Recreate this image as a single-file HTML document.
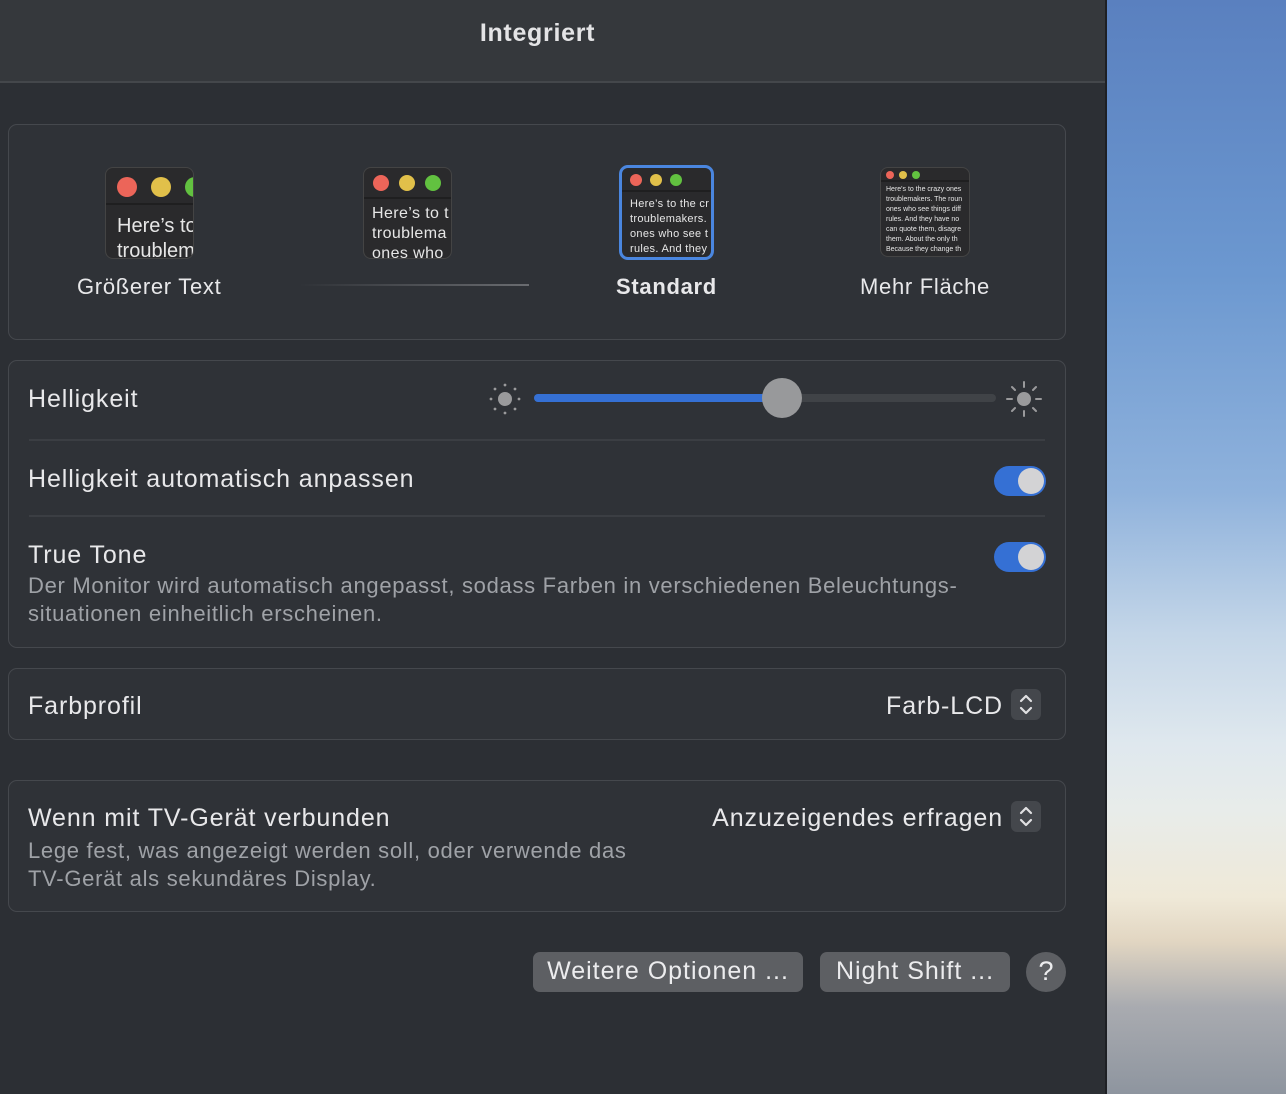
<!DOCTYPE html>
<html><head><meta charset="utf-8"><style>
*{box-sizing:border-box;margin:0;padding:0}
body{width:1286px;height:1094px;overflow:hidden;background:#2c2f34;font-family:"Liberation Sans",sans-serif;color:#e6e6e8;position:relative}
.hdr{position:absolute;left:0;top:0;width:1105px;height:83px;background:#35383c;border-bottom:2px solid #44474b}
.hdr h1{position:absolute;left:0;width:1075px;text-align:center;top:19px;font-size:25px;font-weight:bold;color:#e4e4e6;letter-spacing:0.7px}
.wall{position:absolute;left:1105px;top:0;width:181px;height:1094px;border-left:2px solid #1e2024;
background:linear-gradient(180deg,#5a80bf 0%,#6c98d0 25%,#8fb2dc 45%,#c4d6e8 58%,#dfe8ee 68%,#e8ecea 74%,#efe9d8 82%,#e2d6c2 86%,#a9abb0 92%,#8e959f 100%)}
.card{position:absolute;left:8px;width:1058px;background:#2f3237;border:1.5px solid #45484d;border-radius:9px}
.lbl{position:absolute;font-size:25px;color:#e8e8ea;letter-spacing:0.9px;white-space:nowrap}
.desc{position:absolute;font-size:22px;color:#9fa2a7;line-height:28px;letter-spacing:0.7px;white-space:nowrap}
.sep{position:absolute;left:20px;right:20px;height:2px;background:#3b3e43}
.win{position:absolute;background:#2a2a2c;border:1px solid #444;border-radius:8px;overflow:hidden}
.win .bar{border-bottom:2px solid #1f1f20;position:relative}
.dot{position:absolute;border-radius:50%}
.win p{color:#e6e6e6;white-space:nowrap;position:absolute}
.tog{position:absolute;width:52px;height:30px;border-radius:15px;background:#3570d4}
.tog:after{content:"";position:absolute;right:2px;top:2px;width:26px;height:26px;border-radius:50%;background:#d3d3d5}
.pop{position:absolute;width:30px;height:31px;border-radius:6px;background:#44474c}
.btn{position:absolute;top:952px;height:40px;border-radius:7px;background:#5d5f63;font-size:25px;color:#ececee;text-align:center;line-height:39px;letter-spacing:1px}
.sm{font-size:22px !important;letter-spacing:0.7px}
</style></head><body>
<div class="hdr"><h1>Integriert</h1></div>
<div class="wall"></div>

<div class="card" style="top:124px;height:216px">
 <div class="win" style="left:96px;top:42px;width:89px;height:92px">
  <div class="bar" style="height:37px"><div class="dot" style="left:11px;top:9px;width:20px;height:20px;background:#ec6559"></div><div class="dot" style="left:45px;top:9px;width:20px;height:20px;background:#e1c04a"></div><div class="dot" style="left:79px;top:9px;width:20px;height:20px;background:#62c140"></div></div>
  <p style="left:11px;top:46px;font-size:20px;line-height:25px">Here’s to<br>troublem</p>
 </div>
 <div class="lbl sm" style="left:68px;top:149px">Größerer Text</div>
 <div class="win" style="left:354px;top:42px;width:89px;height:92px">
  <div class="bar" style="height:31px"><div class="dot" style="left:9px;top:7px;width:16px;height:16px;background:#ec6559"></div><div class="dot" style="left:35px;top:7px;width:16px;height:16px;background:#e1c04a"></div><div class="dot" style="left:61px;top:7px;width:16px;height:16px;background:#62c140"></div></div>
  <p style="left:8px;top:36px;font-size:16px;line-height:20px;letter-spacing:0.4px">Here’s to t<br>troublema<br>ones who</p>
 </div>
 <div style="position:absolute;left:290px;top:159px;width:230px;height:2px;background:linear-gradient(90deg,#2f3237,#6a6c70)"></div>
 <div class="win" style="left:610px;top:40px;width:95px;height:95px;border:3px solid #4a86df;border-radius:9px">
  <div class="bar" style="height:24px"><div class="dot" style="left:8px;top:6px;width:12px;height:12px;background:#ec6559"></div><div class="dot" style="left:28px;top:6px;width:12px;height:12px;background:#e1c04a"></div><div class="dot" style="left:48px;top:6px;width:12px;height:12px;background:#62c140"></div></div>
  <p style="left:8px;top:29px;font-size:11px;line-height:15px;letter-spacing:0.3px">Here’s to the cr<br>troublemakers.<br>ones who see t<br>rules. And they</p>
 </div>
 <div class="lbl sm" style="left:607px;top:149px;font-weight:bold">Standard</div>
 <div class="win" style="left:871px;top:42px;width:90px;height:90px">
  <div class="bar" style="height:14px"><div class="dot" style="left:5px;top:3px;width:8px;height:8px;background:#ec6559"></div><div class="dot" style="left:18px;top:3px;width:8px;height:8px;background:#e1c04a"></div><div class="dot" style="left:31px;top:3px;width:8px;height:8px;background:#62c140"></div></div>
  <p style="left:5px;top:17px;font-size:7px;line-height:10px">Here's to the crazy ones<br>troublemakers. The roun<br>ones who see things diff<br>rules. And they have no<br>can quote them, disagre<br>them. About the only th<br>Because they change th</p>
 </div>
 <div class="lbl sm" style="left:851px;top:149px">Mehr Fläche</div>
</div>

<div class="card" style="top:360px;height:288px">
 <div class="lbl" style="left:19px;top:24px">Helligkeit</div>
 <svg style="position:absolute;left:478px;top:20px" width="36" height="36" viewBox="0 0 36 36"><circle cx="18" cy="18" r="7" fill="#9a9a9c"/><g fill="#9a9a9c"><circle cx="18" cy="4" r="1.4"/><circle cx="18" cy="32" r="1.4"/><circle cx="4" cy="18" r="1.4"/><circle cx="32" cy="18" r="1.4"/><circle cx="8" cy="8" r="1.4"/><circle cx="28" cy="8" r="1.4"/><circle cx="8" cy="28" r="1.4"/><circle cx="28" cy="28" r="1.4"/></g></svg>
 <div style="position:absolute;left:525px;top:33px;width:462px;height:8px;border-radius:4px;background:#404347"></div>
 <div style="position:absolute;left:525px;top:33px;width:250px;height:8px;border-radius:4px;background:#3570d4"></div>
 <div style="position:absolute;left:753px;top:17px;width:40px;height:40px;border-radius:50%;background:#98999b"></div>
 <svg style="position:absolute;left:996px;top:19px" width="38" height="38" viewBox="0 0 38 38"><circle cx="19" cy="19" r="7" fill="#9a9a9c"/><g stroke="#9a9a9c" stroke-width="2" stroke-linecap="round"><path d="M19 2v5M19 31v5M2 19h5M31 19h5M7 7l3 3M28 28l3 3M31 7l-3 3M7 31l3-3"/></g></svg>
 <div class="sep" style="top:78px"></div>
 <div class="lbl" style="left:19px;top:104px">Helligkeit automatisch anpassen</div>
 <div class="tog" style="left:985px;top:105px"></div>
 <div class="sep" style="top:154px"></div>
 <div class="lbl" style="left:19px;top:180px">True Tone</div>
 <div class="tog" style="left:985px;top:181px"></div>
 <div class="desc" style="left:19px;top:211px">Der Monitor wird automatisch angepasst, sodass Farben in verschiedenen Beleuchtungs-<br>situationen einheitlich erscheinen.</div>
</div>

<div class="card" style="top:668px;height:72px">
 <div class="lbl" style="left:19px;top:23px">Farbprofil</div>
 <div class="lbl" style="right:62px;top:23px">Farb-LCD</div>
 <div class="pop" style="left:1002px;top:20px"><svg width="30" height="31" viewBox="0 0 30 31"><path d="M10 12l5-5 5 5M10 19l5 5 5-5" stroke="#e0e0e2" stroke-width="2.2" fill="none" stroke-linecap="round" stroke-linejoin="round"/></svg></div>
</div>

<div class="card" style="top:780px;height:132px">
 <div class="lbl" style="left:19px;top:23px">Wenn mit TV-Gerät verbunden</div>
 <div class="lbl" style="right:62px;top:23px">Anzuzeigendes erfragen</div>
 <div class="pop" style="left:1002px;top:20px"><svg width="30" height="31" viewBox="0 0 30 31"><path d="M10 12l5-5 5 5M10 19l5 5 5-5" stroke="#e0e0e2" stroke-width="2.2" fill="none" stroke-linecap="round" stroke-linejoin="round"/></svg></div>
 <div class="desc" style="left:19px;top:56px">Lege fest, was angezeigt werden soll, oder verwende das<br>TV-Gerät als sekundäres Display.</div>
</div>

<div class="btn" style="left:533px;width:270px">Weitere Optionen ...</div>
<div class="btn" style="left:820px;width:190px">Night Shift ...</div>
<div class="btn" style="left:1026px;width:40px;border-radius:50%;font-size:27px;letter-spacing:0">?</div>
</body></html>
